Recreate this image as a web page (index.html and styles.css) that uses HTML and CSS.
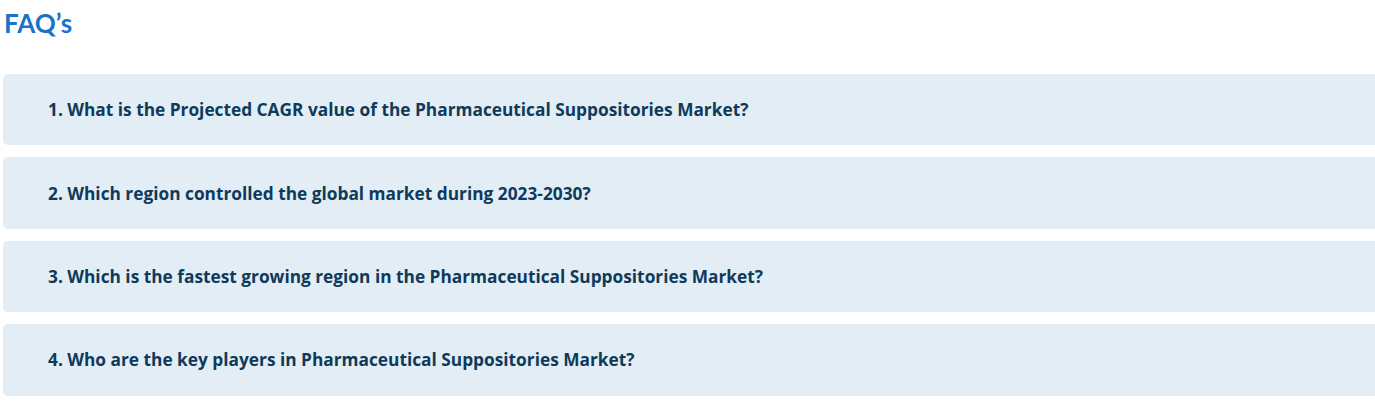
FILE: index.html
```html
<!DOCTYPE html>
<html lang="en">
<head>
  <meta charset="UTF-8" />
  <meta name="viewport" content="width=device-width, initial-scale=1.0"/>
  <title>FAQ's</title>
  <link rel="stylesheet" href="styles.css">
</head>
<body>
  <section class="faq">
    <h2 class="faq-title">FAQ’s</h2>
    <div class="faq-list">
      <div class="faq-item">1. What is the Projected CAGR value of the Pharmaceutical Suppositories Market?</div>
      <div class="faq-item">2. Which region controlled the global market during 2023-2030?</div>
      <div class="faq-item">3. Which is the fastest growing region in the Pharmaceutical Suppositories Market?</div>
      <div class="faq-item">4. Who are the key players in Pharmaceutical Suppositories Market?</div>
    </div>
  </section>
</body>
</html>
```

FILE: styles.css
```css
body {
  margin: 0;
  background-color: #fff;
  font-family: "Open Sans", Lato, Arial, sans-serif;
  overflow: hidden;
}

.faq {
  padding: 6px 0 0 3px;
}

.faq-title {
  margin: 0 0 0 1px;
  font-family: Lato, "Open Sans", Arial, sans-serif;
  font-size: 26px;
  font-weight: 700;
  line-height: 34px;
  color: #1a72c9;
}

.faq-list {
  display: flex;
  flex-direction: column;
  gap: 12px;
  margin-top: 34px;
  margin-right: -20px;
}

.faq-item {
  height: 71.4px;
  display: flex;
  align-items: center;
  padding-left: 45px;
  background-color: #e2edf6;
  border-radius: 5px;
  color: #0f3a5a;
  font-size: 17.3px;
  font-weight: 700;
}
```
